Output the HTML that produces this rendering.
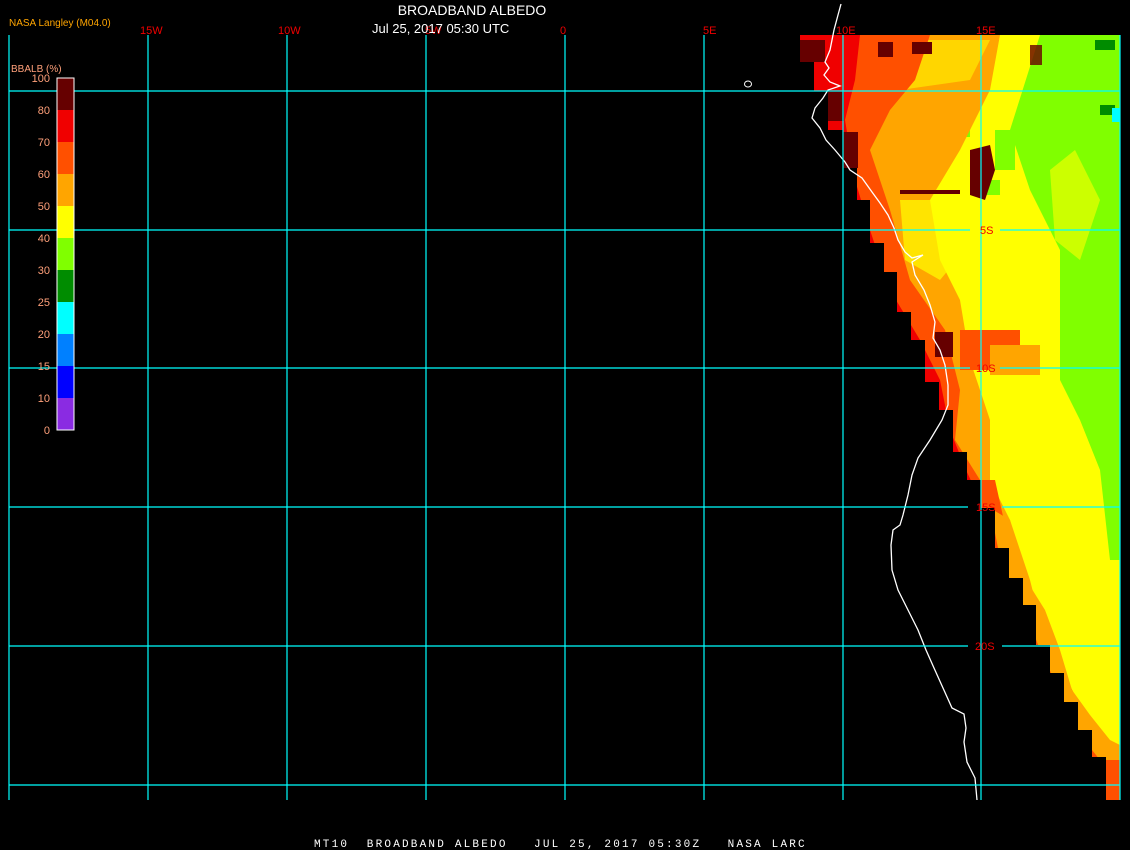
<!DOCTYPE html>
<html><head><meta charset="utf-8"><style>
html,body{margin:0;padding:0;background:#000;width:1130px;height:850px;overflow:hidden}
svg{display:block}
text{font-family:"Liberation Sans",sans-serif}
</style></head><body>
<svg width="1130" height="850" viewBox="0 0 1130 850" xmlns="http://www.w3.org/2000/svg">
<defs>
<clipPath id="d"><polygon points="800,35 1120,35 1120,800 1106,800 1106,757 1092,757 1092,730 1078,730 1078,702 1064,702 1064,673 1050,673 1050,645 1036,645 1036,605 1023,605 1023,578 1009,578 1009,548 995,548 995,508 981,508 981,480 967,480 967,452 953,452 953,410 939,410 939,382 925,382 925,340 911,340 911,312 897,312 897,272 884,272 884,243 870,243 870,200 857,200 857,168 843,168 843,130 828,130 828,91 814,91 814,62 800,62"/></clipPath>
</defs>
<g clip-path="url(#d)">
<rect x="790" y="30" width="340" height="780" fill="#ffff00"/>
<polygon points="1040,35 1120,35 1120,560 1110,560 1100,470 1080,420 1060,380 1060,250 1030,190 1010,130" fill="#80ff00"/>
<polygon points="1050,170 1075,150 1100,200 1080,260 1055,240" fill="#ffff00" opacity=".6"/>
<rect x="905" y="95" width="60" height="15" fill="#80ff00"/>
<rect x="925" y="125" width="45" height="12" fill="#80ff00"/>
<rect x="870" y="75" width="30" height="10" fill="#80ff00"/>
<rect x="970" y="180" width="30" height="15" fill="#80ff00"/>
<rect x="995" y="130" width="20" height="40" fill="#80ff00"/>
<rect x="1095" y="40" width="20" height="10" fill="#008c00"/>
<rect x="1100" y="105" width="15" height="10" fill="#008c00"/>
<rect x="1112" y="108" width="8" height="14" fill="#00ffff"/>
<polygon points="790,35 1000,35 990,90 960,150 930,200 940,260 960,300 970,360 990,420 990,480 1010,520 1030,580 1045,640 1060,700 1100,760 1120,760 1120,810 790,810" fill="#ffa500"/>
<polygon points="900,200 960,200 965,250 940,280 905,260" fill="#ffff00" opacity=".7"/>
<polygon points="870,40 990,40 970,80 900,90 860,70" fill="#ffff00" opacity=".55"/>
<polygon points="790,35 930,35 915,80 890,110 870,150 890,210 910,280 945,330 960,390 955,440 980,480 990,520 1000,570 1030,620 1050,680 1080,730 1106,770 1120,800 790,810" fill="#ff5000"/>
<rect x="960" y="330" width="60" height="40" fill="#ff5000"/>
<rect x="990" y="345" width="50" height="30" fill="#ffa500"/>
<polygon points="790,35 860,35 855,80 845,120 855,180 870,230 890,290 920,340 940,380 950,430 966,470 980,500 1000,540 1015,580 1035,625 1050,660 1120,800 790,810" fill="#f00000"/>
<polygon points="975,480 995,480 1010,548 1023,578 1036,605 1050,645 1064,673 1078,702 1092,730 1106,757 1120,757 1120,800 1000,800 960,480" fill="#ff5000"/>
<polygon points="990,508 1010,520 1025,578 1045,610 1060,650 1072,690 1090,715 1110,740 1120,745 1120,760 1100,760 1080,735 1065,705 1052,675 1040,650 1025,610 1010,580 998,548" fill="#ffa500"/>
<rect x="800" y="40" width="25" height="22" fill="#660000"/>
<rect x="843" y="132" width="15" height="36" fill="#660000"/>
<rect x="828" y="91" width="16" height="30" fill="#660000"/>
<polygon points="970,150 990,145 995,170 985,200 970,195" fill="#660000"/>
<rect x="878" y="42" width="15" height="15" fill="#660000"/>
<rect x="912" y="42" width="20" height="12" fill="#660000"/>
<rect x="935" y="332" width="18" height="25" fill="#660000"/>
<rect x="900" y="190" width="60" height="4" fill="#660000"/>
<rect x="1030" y="45" width="12" height="20" fill="#660000" opacity=".8"/>
</g>
<polyline fill="none" stroke="#fff" stroke-width="1.3" points="841,4 838,15 834,30 830,50 825,62 829,68 824,75 830,82 840,86 828,90 823,98 815,108 812,118 820,128 826,140 835,150 845,162 850,170 862,178 872,192 880,203 888,215 894,228 898,240 905,252 912,258 923,255 912,262 915,275 924,290 930,305 935,322 933,338 940,350 945,365 948,385 948,405 942,420 930,440 918,458 912,475 908,495 903,515 900,525 893,530 891,545 892,570 898,590 908,610 918,630 926,650 934,668 943,688 952,708 964,714 966,728 964,742 967,762 975,778 977,800"/>
<ellipse cx="748" cy="84" rx="3.5" ry="3" fill="none" stroke="#fff" stroke-width="1"/>
<g stroke="#00ffff" stroke-width="1.2">
<line x1="9" y1="35" x2="9" y2="800"/><line x1="148" y1="35" x2="148" y2="800"/><line x1="287" y1="35" x2="287" y2="800"/><line x1="426" y1="35" x2="426" y2="800"/><line x1="565" y1="35" x2="565" y2="800"/><line x1="704" y1="35" x2="704" y2="800"/><line x1="843" y1="35" x2="843" y2="800"/><line x1="981" y1="35" x2="981" y2="800"/><line x1="1120" y1="35" x2="1120" y2="800"/>
<line x1="9" y1="91" x2="1120" y2="91"/>
<line x1="9" y1="230" x2="970" y2="230"/><line x1="1000" y1="230" x2="1120" y2="230"/>
<line x1="9" y1="368" x2="970" y2="368"/><line x1="1000" y1="368" x2="1120" y2="368"/>
<line x1="9" y1="507" x2="968" y2="507"/><line x1="1002" y1="507" x2="1120" y2="507"/>
<line x1="9" y1="646" x2="968" y2="646"/><line x1="1002" y1="646" x2="1120" y2="646"/>
<line x1="9" y1="785" x2="1120" y2="785"/>
</g>
<g fill="#f00000" font-size="11">
<text x="140" y="34">15W</text><text x="278" y="34">10W</text><text x="425" y="34">5W</text><text x="560" y="34">0</text><text x="703" y="34">5E</text><text x="836" y="34">10E</text><text x="976" y="34">15E</text>
<text x="980" y="234">5S</text><text x="976" y="372">10S</text><text x="976" y="511">15S</text><text x="975" y="650">20S</text>
</g>
<text x="472" y="15" fill="#fff" font-size="14" text-anchor="middle">BROADBAND ALBEDO</text>
<text x="372" y="33" fill="#fff" font-size="13">Jul 25, 2017 05:30 UTC</text>
<text x="9" y="26" fill="#ffa500" font-size="10">NASA Langley (M04.0)</text>
<text x="11" y="72" fill="#ffa07a" font-size="10">BBALB (%)</text>
<g>
<rect x="57" y="78" width="17" height="32" fill="#660000"/>
<rect x="57" y="110" width="17" height="32" fill="#f00000"/>
<rect x="57" y="142" width="17" height="32" fill="#ff5000"/>
<rect x="57" y="174" width="17" height="32" fill="#ffa500"/>
<rect x="57" y="206" width="17" height="32" fill="#ffff00"/>
<rect x="57" y="238" width="17" height="32" fill="#80ff00"/>
<rect x="57" y="270" width="17" height="32" fill="#008c00"/>
<rect x="57" y="302" width="17" height="32" fill="#00ffff"/>
<rect x="57" y="334" width="17" height="32" fill="#0080ff"/>
<rect x="57" y="366" width="17" height="32" fill="#0000ff"/>
<rect x="57" y="398" width="17" height="32" fill="#8a2be2"/>
<rect x="57" y="78" width="17" height="352" fill="none" stroke="#fff" stroke-width="1"/>
</g>
<g fill="#ffa07a" font-size="11" text-anchor="end">
<text x="50" y="82">100</text><text x="50" y="114">80</text><text x="50" y="146">70</text><text x="50" y="178">60</text><text x="50" y="210">50</text><text x="50" y="242">40</text><text x="50" y="274">30</text><text x="50" y="306">25</text><text x="50" y="338">20</text><text x="50" y="370">15</text><text x="50" y="402">10</text><text x="50" y="434">0</text>
</g>
<text x="314" y="847" fill="#fff" font-size="11" letter-spacing="2.2" style="font-family:'Liberation Mono',monospace;white-space:pre" xml:space="preserve">MT10  BROADBAND ALBEDO   JUL 25, 2017 05:30Z   NASA LARC</text>
</svg>
</body></html>
